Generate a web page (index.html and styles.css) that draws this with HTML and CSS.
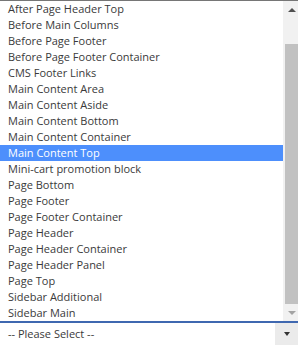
FILE: index.html
```html
<!DOCTYPE html>
<html>
<head>
<meta charset="utf-8">
<link rel="stylesheet" href="styles.css">
</head>
<body>
<div class="dropdown">
  <ul class="list">
    <li>After Page Header Top</li>
    <li>Before Main Columns</li>
    <li>Before Page Footer</li>
    <li>Before Page Footer Container</li>
    <li>CMS Footer Links</li>
    <li>Main Content Area</li>
    <li>Main Content Aside</li>
    <li>Main Content Bottom</li>
    <li>Main Content Container</li>
    <li class="selected">Main Content Top</li>
    <li>Mini-cart promotion block</li>
    <li>Page Bottom</li>
    <li>Page Footer</li>
    <li>Page Footer Container</li>
    <li>Page Header</li>
    <li>Page Header Container</li>
    <li>Page Header Panel</li>
    <li>Page Top</li>
    <li>Sidebar Additional</li>
    <li>Sidebar Main</li>
  </ul>
  <div class="scrollbar">
    <div class="sb-btn"><span class="tri up"></span></div>
    <div class="sb-gap"></div>
    <div class="sb-thumb"></div>
    <div class="sb-btn"><span class="tri down"></span></div>
  </div>
</div>
<div class="select">
  <span class="select-text">-- Please Select --</span>
  <span class="select-arrow"><span class="tri small"></span></span>
</div>
</body>
</html>
```

FILE: styles.css
```css
html, body {
  margin: 0;
  padding: 0;
  background: #fff;
}
body {
  width: 298px;
  height: 345px;
  overflow: hidden;
  font-family: "Open Sans", "Liberation Sans", sans-serif;
  font-size: 11px;
  color: #3a3a3a;
}
.dropdown {
  display: flex;
  border-top: 1px solid #767676;
  border-bottom: 2px solid #3f68b0;
  height: 320px;
}
.list {
  list-style: none;
  margin: 0;
  padding: 0;
  flex: 1;
}
.list li {
  height: 16px;
  line-height: 16px;
  padding-left: 8px;
  white-space: nowrap;
}
.list li.selected {
  background: #4d8ffc;
  color: #fff;
}
.scrollbar {
  width: 15px;
  background: #f1f1f1;
  display: flex;
  flex-direction: column;
}
.sb-btn {
  height: 17px;
  display: flex;
  align-items: center;
  justify-content: center;
  padding-left: 2px;
}
.sb-gap {
  height: 26px;
}
.sb-thumb {
  height: 260px;
  margin-left: 2px;
  background: #c1c1c1;
}
.tri {
  width: 0;
  height: 0;
  border-left: 4px solid transparent;
  border-right: 4px solid transparent;
}
.tri.up {
  border-bottom: 4px solid #505050;
}
.tri.down {
  border-top: 4px solid #a3a3a3;
}
.select {
  display: flex;
  height: 22px;
  align-items: stretch;
}
.select-text {
  flex: 1;
  padding-left: 8px;
  line-height: 22px;
  white-space: nowrap;
}
.select-arrow {
  width: 23px;
  background: #ebebeb;
  display: flex;
  align-items: center;
  justify-content: center;
}
.tri.small {
  border-left: 3px solid transparent;
  border-right: 3px solid transparent;
  border-top: 4px solid #333;
}
```
